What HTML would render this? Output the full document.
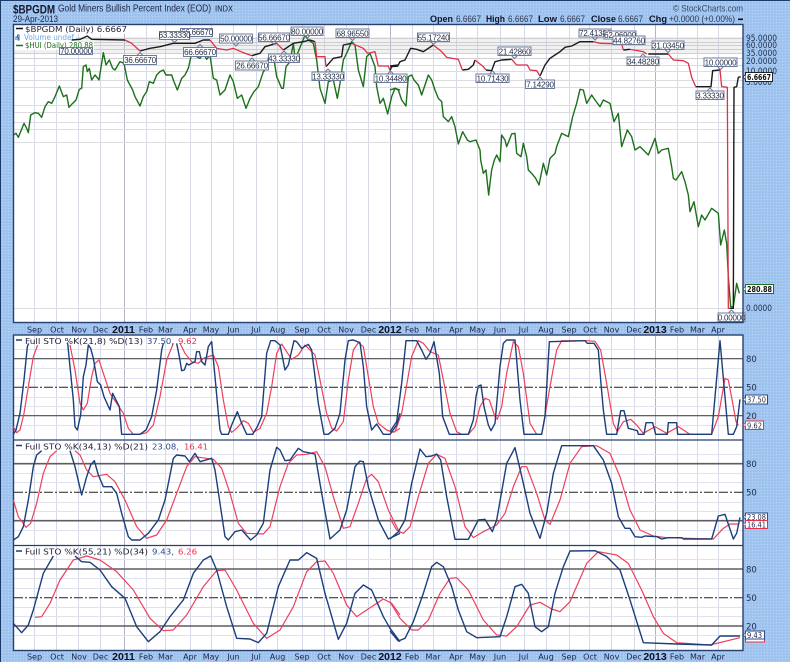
<!DOCTYPE html>
<html><head><meta charset="utf-8"><style>
html,body{margin:0;padding:0;width:790px;height:662px;overflow:hidden;background:#a3c6f1}
svg{display:block}
text{font-family:"DejaVu Sans",sans-serif;font-size:8px;fill:#222238}
.ax text{text-anchor:middle;font-size:8px;fill:#1c2444}
.ax .y{font-family:"Liberation Sans",sans-serif;font-weight:bold;font-size:10.5px;fill:#101020}
.l rect{fill:#fff;stroke:#6c7a9c;stroke-width:1}
.l text{text-anchor:middle;font-family:"Liberation Sans",sans-serif;font-size:8px;letter-spacing:-.2px;fill:#1f2a44}
.r text{font-size:8.5px;fill:#1e2c48}
polyline{fill:none;vector-effect:non-scaling-stroke;stroke-linejoin:round}
.hui polyline{stroke:#1c701c;stroke-width:1.4}
.bk polyline{stroke:#1a1a1a;stroke-width:1.4}
.rd polyline{stroke:#e0304a;stroke-width:1.3}
.bl polyline{stroke:#1c3f7c;stroke-width:1.4}
.rs polyline{stroke:#ee3f5c;stroke-width:1.2}
</style></head><body>
<svg width="790" height="662" viewBox="0 0 790 662" xmlns="http://www.w3.org/2000/svg">
<defs><pattern id="d" width="3" height="3" patternUnits="userSpaceOnUse"><rect width="3" height="3" fill="#a3c6f1"/><rect width="1" height="1" fill="#93bbec"/><rect x="2" y="1" width="1" height="1" fill="#b5d2f5"/><rect x="1" y="2" width="1" height="1" fill="#9ac0ee"/></pattern></defs>
<rect width="790" height="662" fill="url(#d)"/>
<rect x="0" y="0" width="790" height="1" fill="#1c3a68"/><rect x="0" y="0" width="1" height="662" fill="#1c3a68"/>

<rect x="13.5" y="24.5" width="729.5" height="298" fill="#fff"/>
<rect x="13.5" y="335" width="729.5" height="315.5" fill="#fff"/>

<!-- vertical grid -->
<g stroke="#d6d9ea" stroke-width="1">
<path d="M34.5 25V322M56.5 25V322M78.5 25V322M100.5 25V322M146.5 25V322M165.5 25V322M190.5 25V322M211.5 25V322M233.5 25V322M256.5 25V322M277.5 25V322M302.5 25V322M324.5 25V322M346.5 25V322M368.5 25V322M412.5 25V322M433.5 25V322M456.5 25V322M477.5 25V322M500.5 25V322M524.5 25V322M546.5 25V322M569.5 25V322M589.5 25V322M611.5 25V322M634.5 25V322M677.5 25V322M697.5 25V322M718.5 25V322"/>
<path d="M34.5 336V650M56.5 336V650M78.5 336V650M100.5 336V650M146.5 336V650M165.5 336V650M190.5 336V650M211.5 336V650M233.5 336V650M256.5 336V650M277.5 336V650M302.5 336V650M324.5 336V650M346.5 336V650M368.5 336V650M412.5 336V650M433.5 336V650M456.5 336V650M477.5 336V650M500.5 336V650M524.5 336V650M546.5 336V650M569.5 336V650M589.5 336V650M611.5 336V650M634.5 336V650M677.5 336V650M697.5 336V650M718.5 336V650"/>
</g>
<g stroke="#b6b4cc" stroke-width="1"><path d="M124.5 25V322M390.5 25V322M655.5 25V322M124.5 336V650M390.5 336V650M655.5 336V650"/></g>

<!-- main horizontal grid -->
<g stroke="#d0d0d4" stroke-width="1">
<path d="M14 38.5H743M14 42.5H743M14 45.5H743M14 49.5H743M14 53.5H743M14 58.5H743"/></g>
<g stroke="#dcdce2" stroke-width="1">
<path d="M14 65.5H743M14 71.5H743M14 80.5H743M14 87.5H743M14 105.5H743M14 112.5H743M14 122.5H743M14 129.5H743M14 142.5H743M14 308.5H743"/></g>
<rect x="14" y="37" width="729" height="16" fill="#c8c8cc" opacity=".25"/>

<!-- STO grids -->
<g stroke="#e0e2ee" stroke-width="1">
<path d="M14 349.5H743M14 368.5H743M14 378.5H743M14 397.5H743M14 406.5H743M14 425.5H743"/>
<path d="M14 454.5H743M14 473.5H743M14 482.5H743M14 502.5H743M14 511.5H743M14 530.5H743"/>
<path d="M14 559.5H743M14 578.5H743M14 588.5H743M14 607.5H743M14 616.5H743M14 635.5H743"/>
</g>
<g stroke="#4a4a50" stroke-width="1.2"><path d="M14 358.7H743M14 415.7H743"/></g>
<g stroke="#5c5c62" stroke-width="1.6"><path d="M14 463.7H743M14 520.7H743M14 569H743M14 626H743"/></g>
<g stroke="#222" stroke-width="1" stroke-dasharray="9 2 2 2"><path d="M14 387.3H743M14 492.3H743M14 597.7H743"/></g>

<!-- HUI -->
<g class="hui">
<polyline transform="scale(.33333)" points="40,405 48,400 55,412 62,395 72,370 80,385 85,398 92,345 105,338 115,340 125,352 135,320 145,305 155,310 165,290 178,258 190,290 200,285 207,322 218,310 228,300 238,268 245,265 250,200 258,195 262,215 268,205 275,240 285,225 297,240 310,158 318,195 328,180 338,205 345,210 360,185 372,190 382,240 398,270 405,290 420,318 430,290 440,275 448,245 460,250 470,225 480,215 490,210 498,225 515,225 520,240 532,270 545,235 555,225 565,205 575,160 590,170 600,175 610,160 620,178 630,165 640,235 650,240 660,285 675,270 690,225 700,245 712,295 725,285 738,325 750,295 762,275 775,260 790,215 800,205 806,170 820,165 830,230 845,265 850,265 858,200 870,185 880,130 885,175 895,155 905,130 915,105 925,120 940,130 950,180 960,265 975,310 985,245 1000,240 1012,295 1020,250 1030,180 1040,160 1055,125 1065,135 1075,210 1090,260 1100,170 1110,160 1125,200 1130,260 1140,310 1150,295 1163,342 1175,290 1185,265 1200,270"/>
<polyline transform="translate(390,0) scale(.33333)" points="0,270 15,265 25,270 35,300 48,318 55,230 65,225 72,240 85,255 95,285 115,225 125,240 135,270 145,295 155,305 160,350 175,365 185,350 195,380 205,432 218,395 232,420 240,425 258,420 270,450 272,480 280,520 288,510 296,585 300,550 305,510 313,480 320,465 330,485 335,405 345,420 350,440 365,402 375,400 380,460 393,470 400,430 410,470 415,510 425,520 437,535 447,555 460,490 470,525 480,475 495,460 500,440 515,400 535,410 548,350 560,310 570,268 580,270 590,310 605,285 615,300 630,320 640,300 660,310 672,365 685,340 695,440 712,390 725,410 735,450 750,440 775,465 795,415 805,460 815,450 835,445 845,500 850,535 858,540 875,515 885,545 895,585 900,635 912,605 925,680 935,645 945,660 965,625 985,640 992,735 1003,690 1010,730 1015,830 1022,920 1030,920 1040,850 1048,880"/>
</g>

<!-- legend -->
<rect x="14" y="25" width="113" height="9" fill="#fff"/>
<rect x="14" y="34" width="62" height="8" fill="#fff"/>
<rect x="14" y="42" width="80" height="8" fill="#fff"/>
<path d="M16 28.5h7" stroke="#111" stroke-width="1.5"/>
<text x="25" y="32" textLength="102" lengthAdjust="spacingAndGlyphs">$BPGDM (Daily) 6.6667</text>
<path d="M16 40v-3h1.5v-2h1.5v5h-1v-3M19 40v-3" stroke="#2a6fb0" stroke-width="1" fill="none"/>
<text x="24" y="40" textLength="50" lengthAdjust="spacingAndGlyphs" style="fill:#6aa8ec">Volume undef</text>
<path d="M16 45.5h7" stroke="#1c701c" stroke-width="1.5"/>
<text x="25" y="48" textLength="68" lengthAdjust="spacingAndGlyphs" style="fill:#1c701c">$HUI (Daily) 280.88</text>

<!-- BPGDM line -->
<g class="bk">
<polyline transform="scale(.33333)" points="215,120 240,118 262,108 275,118 375,120"/>
<polyline transform="scale(.33333)" points="420,153 450,145 480,140 520,130 545,130 585,130 610,120 630,120"/>
<polyline transform="scale(.33333)" points="755,167 780,160 795,140 830,130"/>
<polyline transform="scale(.33333)" points="850,150 880,130 910,125 930,120 945,125"/>
<polyline transform="scale(.33333)" points="978,200 1000,175 1025,170 1030,135 1055,130"/>
<polyline transform="scale(.33333)" points="1170,212 1175,200 1195,198"/>
<polyline transform="translate(390,0) scale(.33333)" points="0,198 25,195 30,185 45,180 62,145 80,148 100,155 130,135"/>
<polyline transform="translate(390,0) scale(.33333)" points="217,210 235,208 250,195 255,180"/>
<polyline transform="translate(390,0) scale(.33333)" points="288,210 305,212 315,185 335,180 365,178"/>
<polyline transform="translate(390,0) scale(.33333)" points="450,228 465,195 480,175 495,165 510,155 525,142 545,138 570,125 610,125"/>
<polyline transform="translate(390,0) scale(.33333)" points="700,150 720,148"/>
<polyline transform="translate(390,0) scale(.33333)" points="775,162 835,162"/>
<polyline transform="translate(390,0) scale(.33333)" points="917,260 963,260 968,212 990,210"/>
<polyline transform="translate(390,0) scale(.33333)" points="1020,925 1030,925 1032,262 1040,260 1045,232 1052,230"/>
</g>
<g class="rd">
<polyline transform="scale(.33333)" points="375,120 395,130 420,153"/>
<polyline transform="scale(.33333)" points="630,120 650,145 680,150 700,145 730,158 755,167"/>
<polyline transform="scale(.33333)" points="830,130 850,150"/>
<polyline transform="scale(.33333)" points="945,125 950,170 975,170 978,200"/>
<polyline transform="scale(.33333)" points="1055,130 1090,145 1103,160 1125,155 1135,198 1165,198 1170,212"/>
<polyline transform="translate(390,0) scale(.33333)" points="130,135 155,155 170,172 205,178 217,210"/>
<polyline transform="translate(390,0) scale(.33333)" points="255,180 280,200 288,210"/>
<polyline transform="translate(390,0) scale(.33333)" points="365,178 380,195 412,195 420,210 440,212 450,228"/>
<polyline transform="translate(390,0) scale(.33333)" points="610,125 630,130 695,132 700,150"/>
<polyline transform="translate(390,0) scale(.33333)" points="720,148 760,155 770,162"/>
<polyline transform="translate(390,0) scale(.33333)" points="835,162 850,180 880,182 895,190 905,232 917,260"/>
<polyline transform="translate(390,0) scale(.33333)" points="990,210 995,260 1012,262 1015,925 1020,925"/>
</g>

<!-- data labels -->
<g class="l">
<rect x="59.5" y="47.5" width="33" height="7"/><text x="76" y="54">70.00000</text>
<rect x="123.5" y="55.5" width="33" height="9"/><text x="140" y="63">36.66670</text>
<rect x="180.5" y="28.5" width="32" height="8"/><text x="197" y="35">66.66670</text>
<rect x="159.5" y="31.5" width="30" height="8"/><text x="174.5" y="38">63.33330</text>
<rect x="183.5" y="47.5" width="33" height="9"/><text x="200" y="55">66.66670</text>
<rect x="219.5" y="34" width="33" height="9"/><text x="236" y="41.5">50.00000</text>
<rect x="258.5" y="33" width="31" height="8.5"/><text x="274" y="40.5">56.66670</text>
<rect x="235.5" y="61" width="33" height="9"/><text x="252" y="68.5">26.66670</text>
<rect x="268.5" y="54" width="31" height="8.5"/><text x="284" y="61.5">43.33330</text>
<rect x="291" y="27" width="32" height="8.5"/><text x="307" y="34.5">80.00000</text>
<rect x="312" y="72" width="32" height="8.5"/><text x="328" y="79.5">13.33330</text>
<rect x="336" y="29" width="33" height="8.5"/><text x="352.5" y="36.5">68.96550</text>
<rect x="374" y="74" width="33" height="8.5"/><text x="390.5" y="81.5">10.34480</text>
<rect x="417.5" y="33" width="32" height="8.5"/><text x="433.5" y="40.5">55.17240</text>
<rect x="498" y="47" width="33" height="8.5"/><text x="514.5" y="54.5">21.42860</text>
<rect x="476" y="74" width="33" height="8.5"/><text x="492.5" y="81.5">10.71430</text>
<rect x="525.5" y="80" width="29" height="8.5"/><text x="540" y="87.5">7.14290</text>
<rect x="579" y="29" width="32" height="8"/><text x="595" y="36">72.41380</text>
<rect x="604" y="31" width="32" height="8"/><text x="620" y="38">62.06900</text>
<rect x="613" y="36" width="32" height="8.5"/><text x="629" y="43.5">44.82760</text>
<rect x="627" y="57" width="32" height="8.5"/><text x="643" y="64.5">34.48280</text>
<rect x="652" y="41" width="32" height="8.5"/><text x="668" y="48.5">31.03450</text>
<rect x="704" y="58" width="33" height="8.5"/><text x="720.5" y="65.5">10.00000</text>
<rect x="696" y="91" width="28" height="8.5"/><text x="710" y="98.5">3.33330</text>
<rect x="718" y="313" width="27" height="8.5"/><text x="731.5" y="320.5">0.00000</text>
<!-- pointers -->
<path fill="none" stroke="#6c7a9c" stroke-width="1" d="M171.5 39.5l3 3 3-3M233 43l3 3 3-3M271 41.5l3 3 3-3M304 35.5l3 3 3-3M349.5 37.5l3 3 3-3M430.5 41.5l3 3 3-3M511.5 55.5l3 3 3-3M592 37l3 3 3-3M665 49.5l3 3 3-3M717.5 66.5l3 3 3-3M137 55.5l3-3 3 3M197 47.5l3-3 3 3M249 61l3-3 3 3M281 54l3-3 3 3M325 72l3-3 3 3M387.5 74l3-3 3 3M489.5 74l3-3 3 3M537 80l3-3 3 3M640 57l3-3 3 3M707 91l3-3 3 3M728.5 313l3-3 3 3"/>
</g>

<!-- panel frames -->
<g fill="none" stroke="#27406e">
<rect x="13.5" y="24.5" width="729.5" height="298" stroke-width="1.4"/>
<rect x="13.5" y="335" width="729.5" height="315.5" stroke-width="1.4"/>
<path d="M13.5 440H743M13.5 545.5H743" stroke-width="1.2"/>
</g>

<!-- STO1 -->
<g class="rs">
<polyline transform="translate(0,300) scale(.33333)" points="40,380 50,398 60,390 72,340 85,260 100,170 113,135"/>
<polyline transform="translate(0,300) scale(.33333)" points="210,135 225,210 240,310 250,330 262,310 275,230 285,190 297,180 310,220 330,280 350,310 370,340 385,385 400,403 420,403 440,398 460,375 480,290 500,180 520,130"/>
<polyline transform="translate(0,300) scale(.33333)" points="540,130 555,160 575,185 595,190 610,175 640,165 655,200 670,300 685,380 695,397 710,385 730,362 745,370 760,397 780,385 800,340 815,260 830,160 845,132 860,155 875,178 895,165 915,135 945,165 960,240 980,340 995,385 1010,393 1030,365 1045,240 1060,150 1075,128 1090,140 1105,230 1120,320 1135,370 1160,390 1180,397 1200,385"/>
<polyline transform="translate(390,300) scale(.33333)" points="0,395 15,395 35,340 65,170 85,122 100,130 120,155 145,165 160,240 180,340 200,395 215,403 235,403 255,380 270,320 285,295 298,300 315,350 322,358 335,320 350,220 370,125 385,140 400,220 420,370 440,403 455,403 480,260 500,150 515,122 590,122 615,124 632,150 650,250 670,370 682,395 700,365 722,358 740,375 760,400 795,380 830,400 865,380 900,403 965,403 985,350 1005,235 1015,240 1030,320 1038,365 1045,375"/>
</g>
<g class="bl">
<polyline transform="translate(0,300) scale(.33333)" points="40,403 48,390 60,340 72,240 82,140 86,130"/>
<polyline transform="translate(0,300) scale(.33333)" points="203,130 210,200 220,300 225,380 232,390 242,345 250,230 258,195 265,135 272,145 280,175 292,245 302,255 312,290 330,330 338,280 358,320 365,403 420,403 438,390 455,350 470,270 485,150 490,130"/>
<polyline transform="translate(0,300) scale(.33333)" points="530,130 538,170 545,212 553,210 560,190 566,195 575,190 585,185 590,155 598,155 605,185 615,195 625,140 635,125 645,230 655,340 660,390 665,403 685,403 695,375 712,335 725,370 740,403 758,403 772,380 785,350 800,160 812,122 825,122 840,135 855,210 865,195 882,122 890,125 905,145 925,133 935,150 955,310 972,403 985,403 1005,385 1020,340 1035,180 1045,122 1060,120 1080,128 1090,200 1100,320 1115,390 1130,372 1150,403 1170,403 1190,375 1200,340"/>
<polyline transform="translate(390,300) scale(.33333)" points="0,395 20,365 35,250 48,122 80,122 95,150 108,178 120,160 132,125 148,220 158,350 178,403 235,403 250,360 258,290 265,258 273,255 282,320 295,375 303,392 315,370 330,200 340,130 350,120 375,120 390,300 402,403 455,403 465,350 478,125 585,122 592,130 612,130 625,150 632,240 640,330 650,403 680,403 692,332 702,332 715,385 742,392 745,403 762,403 768,368 788,368 797,403 832,403 835,368 860,368 863,403 965,403 990,122 1015,403 1030,403 1040,380 1050,298"/>
</g>

<!-- STO2 -->
<g class="rs">
<polyline transform="translate(0,430) scale(.33333)" points="40,210 55,260 78,292 92,280 110,220 130,130 150,80 170,62"/>
<polyline transform="translate(0,430) scale(.33333)" points="225,62 240,75 260,120 280,140 320,133 345,155 375,210 410,290 440,325 470,315 500,270 530,190 560,110 585,80 640,88 665,115 690,190 715,280 740,310 790,312 810,290 840,170 865,100 890,75 920,73 950,65 975,110 1000,200 1030,295 1050,290 1075,220 1100,145 1115,133 1135,155 1165,240 1200,310"/>
<polyline transform="translate(390,430) scale(.33333)" points="0,265 20,300 40,310 60,290 85,200 115,100 140,73 165,85 195,170 225,290 250,323 280,305 320,285 345,250 370,170 395,110 410,110 440,190 465,270 480,283 510,210 540,100 575,50 620,47 660,70 690,140 720,240 750,300 790,318 830,323 940,326 970,327 1000,295 1020,282 1045,282"/>
</g>
<g class="bl">
<polyline transform="translate(0,430) scale(.33333)" points="40,330 55,320 70,290 85,210 100,110 110,75 125,62"/>
<polyline transform="translate(0,430) scale(.33333)" points="210,62 225,110 245,195 260,140 272,105 283,92 295,135 310,170 335,170 350,190 365,250 385,320 395,330 420,330 445,310 475,270 495,210 520,85 530,75 555,78 568,95 585,70 600,95 635,85 645,120 660,220 675,320 685,330 705,305 725,300 752,330 770,315 790,280 810,120 830,52 840,60 855,92 870,90 895,55 910,65 945,72 965,190 990,327 1020,300 1040,240 1065,110 1080,93 1090,95 1105,170 1135,270 1165,327 1200,310"/>
<polyline transform="translate(390,430) scale(.33333)" points="0,327 25,305 45,270 65,160 90,57 108,80 125,78 140,72 152,90 170,200 195,328 235,328 265,270 285,268 307,305 320,270 350,100 375,53 400,160 420,250 450,325 470,250 490,130 515,47 610,47 640,90 665,160 685,260 705,295 720,295 735,320 755,322 765,318 800,320 815,327 835,323 875,323 880,327 965,327 985,258 1005,253 1030,327 1040,310 1050,262"/>
</g>

<!-- STO3 -->
<g class="rs">
<polyline transform="translate(0,430) scale(.33333)" points="105,562 125,560 150,520 180,450 220,390 260,378 300,390 350,425 400,480 450,565 490,602 520,600 560,555 610,470 650,422 675,420 710,480 760,580 800,625 840,600 880,530 920,425 950,395 975,393 1000,430 1040,525 1070,560 1100,540 1150,507 1175,520 1200,555"/>
<polyline transform="translate(390,430) scale(.33333)" points="0,515 30,565 65,600 85,600 115,570 150,490 180,445 200,443 235,480 280,570 320,615 350,618 380,590 420,525 450,517 485,537 510,545 540,515 590,400 625,365 680,375 715,400 755,480 790,560 820,610 860,638 960,645 1050,623"/>
</g>
<g class="bl">
<polyline transform="translate(0,430) scale(.33333)" points="40,580 65,608 85,585 100,540 130,430 160,378"/>
<polyline transform="translate(0,430) scale(.33333)" points="225,378 245,395 270,397 300,420 335,470 375,505 410,590 445,635 480,605 510,560 550,510 580,430 610,390 632,378 650,420 680,530 710,625 750,627 775,638 800,610 835,470 870,390 895,390 920,368 950,385 975,490 1015,628 1040,580 1065,490 1090,465 1115,480 1150,560 1170,595 1200,635"/>
<polyline transform="translate(390,430) scale(.33333)" points="0,603 25,633 45,625 70,575 100,490 125,410 140,397 160,410 185,470 205,540 230,605 260,623 330,620 350,560 375,470 395,463 415,490 435,590 455,605 475,590 495,490 520,410 540,363 615,362 650,380 690,420 720,510 760,638 860,642 965,645 990,618 1050,618"/>
</g>

<!-- STO legends -->
<rect x="14" y="336" width="184" height="8.5" fill="#fff" opacity="0"/>
<path d="M16 340h6M16 445.5h6M16 551h6" stroke="#1c3f7c" stroke-width="1.5"/>
<text x="25" y="344" textLength="118" lengthAdjust="spacingAndGlyphs">Full STO %K(21,8) %D(13)</text>
<text x="147" y="344" textLength="27" lengthAdjust="spacingAndGlyphs" style="fill:#2c4a8a">37.50,</text>
<text x="178" y="344" textLength="19" lengthAdjust="spacingAndGlyphs" style="fill:#e8304e">9.62</text>
<text x="25" y="449.5" textLength="123" lengthAdjust="spacingAndGlyphs">Full STO %K(34,13) %D(21)</text>
<text x="152" y="449.5" textLength="27" lengthAdjust="spacingAndGlyphs" style="fill:#2c4a8a">23.08,</text>
<text x="184" y="449.5" textLength="24" lengthAdjust="spacingAndGlyphs" style="fill:#e8304e">16.41</text>
<text x="25" y="554.5" textLength="123" lengthAdjust="spacingAndGlyphs">Full STO %K(55,21) %D(34)</text>
<text x="152" y="554.5" textLength="22" lengthAdjust="spacingAndGlyphs" style="fill:#2c4a8a">9.43,</text>
<text x="178" y="554.5" textLength="19" lengthAdjust="spacingAndGlyphs" style="fill:#e8304e">6.26</text>

<!-- x axis -->
<g class="ax">
<text x="34.5" y="332.5">Sep</text><text x="57" y="332.5">Oct</text><text x="79" y="332.5">Nov</text><text x="100.5" y="332.5">Dec</text><text class="y" x="123.5" y="333">2011</text><text x="146" y="332.5">Feb</text><text x="165.5" y="332.5">Mar</text><text x="190" y="332.5">Apr</text><text x="211" y="332.5">May</text><text x="233.5" y="332.5">Jun</text><text x="256" y="332.5">Jul</text><text x="277.5" y="332.5">Aug</text><text x="302" y="332.5">Sep</text><text x="324" y="332.5">Oct</text><text x="346" y="332.5">Nov</text><text x="368.5" y="332.5">Dec</text><text class="y" x="390" y="333">2012</text><text x="412" y="332.5">Feb</text><text x="433" y="332.5">Mar</text><text x="456" y="332.5">Apr</text><text x="477.5" y="332.5">May</text><text x="500" y="332.5">Jun</text><text x="523.5" y="332.5">Jul</text><text x="546" y="332.5">Aug</text><text x="569" y="332.5">Sep</text><text x="590" y="332.5">Oct</text><text x="611.5" y="332.5">Nov</text><text x="634" y="332.5">Dec</text><text class="y" x="655" y="333">2013</text><text x="677" y="332.5">Feb</text><text x="697.5" y="332.5">Mar</text><text x="718" y="332.5">Apr</text>
<text x="34.5" y="659.5">Sep</text><text x="57" y="659.5">Oct</text><text x="79" y="659.5">Nov</text><text x="100.5" y="659.5">Dec</text><text class="y" x="123.5" y="660">2011</text><text x="146" y="659.5">Feb</text><text x="165.5" y="659.5">Mar</text><text x="190" y="659.5">Apr</text><text x="211" y="659.5">May</text><text x="233.5" y="659.5">Jun</text><text x="256" y="659.5">Jul</text><text x="277.5" y="659.5">Aug</text><text x="302" y="659.5">Sep</text><text x="324" y="659.5">Oct</text><text x="346" y="659.5">Nov</text><text x="368.5" y="659.5">Dec</text><text class="y" x="390" y="660">2012</text><text x="412" y="659.5">Feb</text><text x="433" y="659.5">Mar</text><text x="456" y="659.5">Apr</text><text x="477.5" y="659.5">May</text><text x="500" y="659.5">Jun</text><text x="523.5" y="659.5">Jul</text><text x="546" y="659.5">Aug</text><text x="569" y="659.5">Sep</text><text x="590" y="659.5">Oct</text><text x="611.5" y="659.5">Nov</text><text x="634" y="659.5">Dec</text><text class="y" x="655" y="660">2013</text><text x="677" y="659.5">Feb</text><text x="697.5" y="659.5">Mar</text><text x="718" y="659.5">Apr</text>
</g>

<!-- right axis -->
<g class="r">
<text x="746" y="41" textLength="31" lengthAdjust="spacingAndGlyphs">95.0000</text><text x="746" y="48" textLength="31" lengthAdjust="spacingAndGlyphs">60.0000</text><text x="746" y="56" textLength="31" lengthAdjust="spacingAndGlyphs">35.0000</text><text x="746" y="64" textLength="31" lengthAdjust="spacingAndGlyphs">20.0000</text><text x="746" y="74" textLength="31" lengthAdjust="spacingAndGlyphs">10.0000</text><text x="746" y="85" textLength="26" lengthAdjust="spacingAndGlyphs">5.0000</text>
<text x="746" y="311" textLength="26" lengthAdjust="spacingAndGlyphs">0.0000</text>
<text x="746" y="362">80</text><text x="746" y="390.5">50</text><text x="746" y="419">20</text>
<text x="746" y="467">80</text><text x="746" y="495.5">50</text>
<text x="746" y="572.5">80</text><text x="746" y="601">50</text><text x="746" y="629.5">20</text>
</g>
<g>
<rect x="745.5" y="72.5" width="27" height="9" fill="#fff" stroke="#222"/><text x="747" y="80" textLength="24" lengthAdjust="spacingAndGlyphs" style="font-weight:bold;fill:#111">6.6667</text>
<rect x="745.5" y="284.5" width="28" height="9" fill="#fff" stroke="#1c701c"/><text x="747" y="292" textLength="25" lengthAdjust="spacingAndGlyphs" style="font-weight:bold;fill:#111">280.88</text>
<rect x="745.5" y="395" width="22" height="9" fill="#fff" stroke="#2c4a8a"/><text x="747" y="402.5" textLength="19" lengthAdjust="spacingAndGlyphs" style="fill:#1e2c48">37.50</text>
<rect x="745.5" y="421" width="18" height="8.5" fill="#fff" stroke="#e8304e"/><text x="747" y="428.5" textLength="15" lengthAdjust="spacingAndGlyphs" style="fill:#1e2c48">9.62</text>
<rect x="745.5" y="513" width="22" height="8" fill="#fff" stroke="#2c4a8a"/><text x="747" y="520" textLength="19" lengthAdjust="spacingAndGlyphs" style="fill:#1e2c48">23.08</text>
<rect x="745.5" y="520.5" width="22" height="8" fill="#fff" stroke="#e8304e"/><text x="747" y="527.5" textLength="19" lengthAdjust="spacingAndGlyphs" style="fill:#1e2c48">16.41</text>
<rect x="745.5" y="637" width="19" height="5" fill="#fff" stroke="#e8304e"/>
<rect x="745.5" y="631" width="19" height="8" fill="#fff" stroke="#2c4a8a"/><text x="747" y="638" textLength="15" lengthAdjust="spacingAndGlyphs" style="fill:#1e2c48">9.43</text>
<path fill="#fff" stroke="#222" stroke-width=".8" d="M745.5 74.5l-2.5 2.5 2.5 2.5"/>
<path fill="#fff" stroke="#1c701c" stroke-width=".8" d="M745.5 286.5l-2.5 2.5 2.5 2.5"/>
<path fill="#fff" stroke="#2c4a8a" stroke-width=".8" d="M745.5 397l-2.5 2.5 2.5 2.5M745.5 515l-2.5 2 2.5 2M745.5 633l-2.5 2 2.5 2"/>
<path fill="#fff" stroke="#e8304e" stroke-width=".8" d="M745.5 423l-2.5 2 2.5 2M745.5 522.5l-2.5 2 2.5 2"/>
</g>

<!-- header -->
<text x="13" y="13.5" textLength="42" lengthAdjust="spacingAndGlyphs" style="font-family:'Liberation Sans',sans-serif;font-weight:bold;font-size:11.5px;fill:#14182a">$BPGDM</text>
<text x="58" y="11.5" textLength="153" lengthAdjust="spacingAndGlyphs" style="font-family:'Liberation Sans',sans-serif;font-size:10px;fill:#1c2444">Gold Miners Bullish Percent Index (EOD)</text>
<text x="215" y="11.5" textLength="18" lengthAdjust="spacingAndGlyphs" style="font-size:7.5px;fill:#1c2444">INDX</text>
<text x="13" y="22" textLength="45" lengthAdjust="spacingAndGlyphs" style="font-family:'Liberation Sans',sans-serif;font-size:9px;fill:#1c2444">29-Apr-2013</text>
<text x="673" y="11.5" textLength="70" lengthAdjust="spacingAndGlyphs" style="font-family:'Liberation Sans',sans-serif;font-size:9.5px;fill:#3a4a6a">© StockCharts.com</text>
<text x="430" y="22" textLength="23" lengthAdjust="spacingAndGlyphs" style="font-family:'Liberation Sans',sans-serif;font-weight:bold;font-size:9.5px;fill:#10142a">Open</text>
<text x="456" y="22" textLength="25" lengthAdjust="spacingAndGlyphs" style="font-family:'Liberation Sans',sans-serif;font-size:9.5px;fill:#2a3550">6.6667</text>
<text x="486" y="22" textLength="19" lengthAdjust="spacingAndGlyphs" style="font-family:'Liberation Sans',sans-serif;font-weight:bold;font-size:9.5px;fill:#10142a">High</text>
<text x="508" y="22" textLength="25" lengthAdjust="spacingAndGlyphs" style="font-family:'Liberation Sans',sans-serif;font-size:9.5px;fill:#2a3550">6.6667</text>
<text x="538" y="22" textLength="19" lengthAdjust="spacingAndGlyphs" style="font-family:'Liberation Sans',sans-serif;font-weight:bold;font-size:9.5px;fill:#10142a">Low</text>
<text x="560" y="22" textLength="25" lengthAdjust="spacingAndGlyphs" style="font-family:'Liberation Sans',sans-serif;font-size:9.5px;fill:#2a3550">6.6667</text>
<text x="591" y="22" textLength="25" lengthAdjust="spacingAndGlyphs" style="font-family:'Liberation Sans',sans-serif;font-weight:bold;font-size:9.5px;fill:#10142a">Close</text>
<text x="618" y="22" textLength="25" lengthAdjust="spacingAndGlyphs" style="font-family:'Liberation Sans',sans-serif;font-size:9.5px;fill:#2a3550">6.6667</text>
<text x="649" y="22" textLength="18" lengthAdjust="spacingAndGlyphs" style="font-family:'Liberation Sans',sans-serif;font-weight:bold;font-size:9.5px;fill:#10142a">Chg</text>
<text x="669" y="22" textLength="66" lengthAdjust="spacingAndGlyphs" style="font-family:'Liberation Sans',sans-serif;font-size:9.5px;fill:#2a3550">+0.0000 (+0.00%)</text>
<rect x="738" y="18.5" width="5" height="1.6" fill="#111"/>
</svg>
</body></html>
